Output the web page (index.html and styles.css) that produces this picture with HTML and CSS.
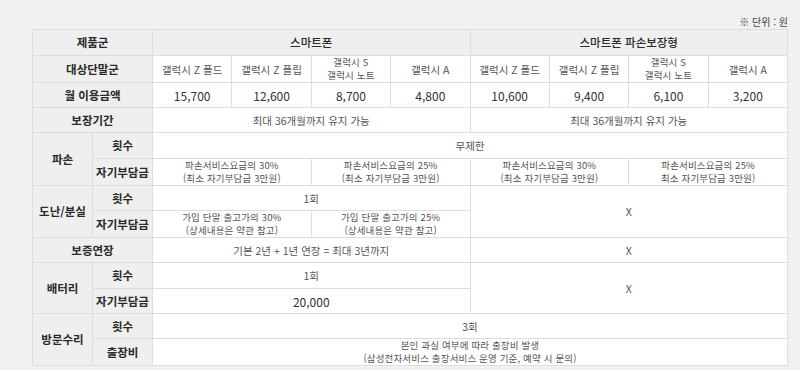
FILE: index.html
```html
<!DOCTYPE html>
<html lang="ko">
<head>
<meta charset="utf-8">
<link rel="stylesheet" href="styles.css">
</head>
<body>
<div class="wrap">
  <p class="unit">※ 단위 : 원</p>
  <table class="spec">
    <colgroup>
      <col class="c-lab"><col class="c-lab">
      <col><col><col><col><col><col><col><col>
    </colgroup>
    <tbody>
      <tr class="h26">
        <th colspan="2" class="lab">제품군</th>
        <th colspan="4" class="head">스마트폰</th>
        <th colspan="4" class="head">스마트폰 파손보장형</th>
      </tr>
      <tr class="h27">
        <th colspan="2" class="lab">대상단말군</th>
        <td>갤럭시 Z 폴드</td>
        <td>갤럭시 Z 플립</td>
        <td class="two">갤럭시 S<br>갤럭시 노트</td>
        <td>갤럭시 A</td>
        <td>갤럭시 Z 폴드</td>
        <td>갤럭시 Z 플립</td>
        <td class="two">갤럭시 S<br>갤럭시 노트</td>
        <td>갤럭시 A</td>
      </tr>
      <tr class="h25 num">
        <th colspan="2" class="lab">월 이용금액</th>
        <td>15,700</td><td>12,600</td><td>8,700</td><td>4,800</td>
        <td>10,600</td><td>9,400</td><td>6,100</td><td>3,200</td>
      </tr>
      <tr class="h25">
        <th colspan="2" class="lab">보장기간</th>
        <td colspan="4">최대 36개월까지 유지 가능</td>
        <td colspan="4">최대 36개월까지 유지 가능</td>
      </tr>
      <tr class="h26">
        <th rowspan="2" class="lab">파손</th>
        <th class="lab dash">횟수</th>
        <td colspan="8" class="dash">무제한</td>
      </tr>
      <tr class="h27">
        <th class="lab">자기부담금</th>
        <td colspan="2" class="two">파손서비스요금의 30%<br>(최소 자기부담금 3만원)</td>
        <td colspan="2" class="two">파손서비스요금의 25%<br>(최소 자기부담금 3만원)</td>
        <td colspan="2" class="two">파손서비스요금의 30%<br>(최소 자기부담금 3만원)</td>
        <td colspan="2" class="two">파손서비스요금의 25%<br>최소 자기부담금 3만원)</td>
      </tr>
      <tr class="h25">
        <th rowspan="2" class="lab">도난/분실</th>
        <th class="lab dash">횟수</th>
        <td colspan="4" class="dash">1회</td>
        <td colspan="4" rowspan="2">X</td>
      </tr>
      <tr class="h27">
        <th class="lab">자기부담금</th>
        <td colspan="2" class="two">가입 단말 출고가의 30%<br>(상세내용은 약관 참고)</td>
        <td colspan="2" class="two">가입 단말 출고가의 25%<br>(상세내용은 약관 참고)</td>
      </tr>
      <tr class="h25">
        <th colspan="2" class="lab">보증연장</th>
        <td colspan="4">기본 2년 + 1년 연장 = 최대 3년까지</td>
        <td colspan="4">X</td>
      </tr>
      <tr class="h26">
        <th rowspan="2" class="lab">배터리</th>
        <th class="lab dash">횟수</th>
        <td colspan="4" class="dash">1회</td>
        <td colspan="4" rowspan="2">X</td>
      </tr>
      <tr class="h25 num">
        <th class="lab">자기부담금</th>
        <td colspan="4">20,000</td>
      </tr>
      <tr class="h25">
        <th rowspan="2" class="lab">방문수리</th>
        <th class="lab dash">횟수</th>
        <td colspan="8" class="dash">3회</td>
      </tr>
      <tr class="h27">
        <th class="lab">출장비</th>
        <td colspan="8" class="two">본인 과실 여부에 따라 출장비 발생<br>(삼성전자서비스 출장서비스 운영 기준, 예약 시 문의)</td>
      </tr>
    </tbody>
  </table>
</div>
</body>
</html>
```

FILE: styles.css
```css
html, body {
  margin: 0;
  padding: 0;
  background: #f1f1f1;
}
body {
  font-family: "Noto Sans CJK KR", "Noto Sans", sans-serif;
  color: #555;
}
.wrap {
  padding: 14px 12px 0 32px;
}
.unit {
  margin: 0;
  text-align: right;
  font-size: 10px;
  line-height: 15px;
  color: #444;
}
.spec {
  width: 756px;
  table-layout: fixed;
  border-collapse: collapse;
  background: #fff;
  border: 1px solid #dcdcdc;
}
.c-lab { width: 60px; }
.spec th, .spec td {
  border: 1px solid #dedede;
  padding: 0;
  text-align: center;
  vertical-align: middle;
  font-size: 10.5px;
  line-height: 13px;
  font-weight: 400;
}
.spec td.two {
  font-size: 9.5px;
  line-height: 13px;
  letter-spacing: 0.15px;
}
.spec th.lab {
  background: #efefef;
  color: #2a2a2a;
  font-weight: 700;
  font-size: 11.5px;
}
.spec th.head {
  background: #efefef;
  color: #2a2a2a;
  font-weight: 500;
  font-size: 11.5px;
}
.num td {
  font-size: 12px;
  color: #333;
}
.spec .dash {
  border-bottom: 1px dashed #d4d4d4;
}
.h25 { height: 25px; }
.h26 { height: 26px; }
.h27 { height: 27px; }
```
